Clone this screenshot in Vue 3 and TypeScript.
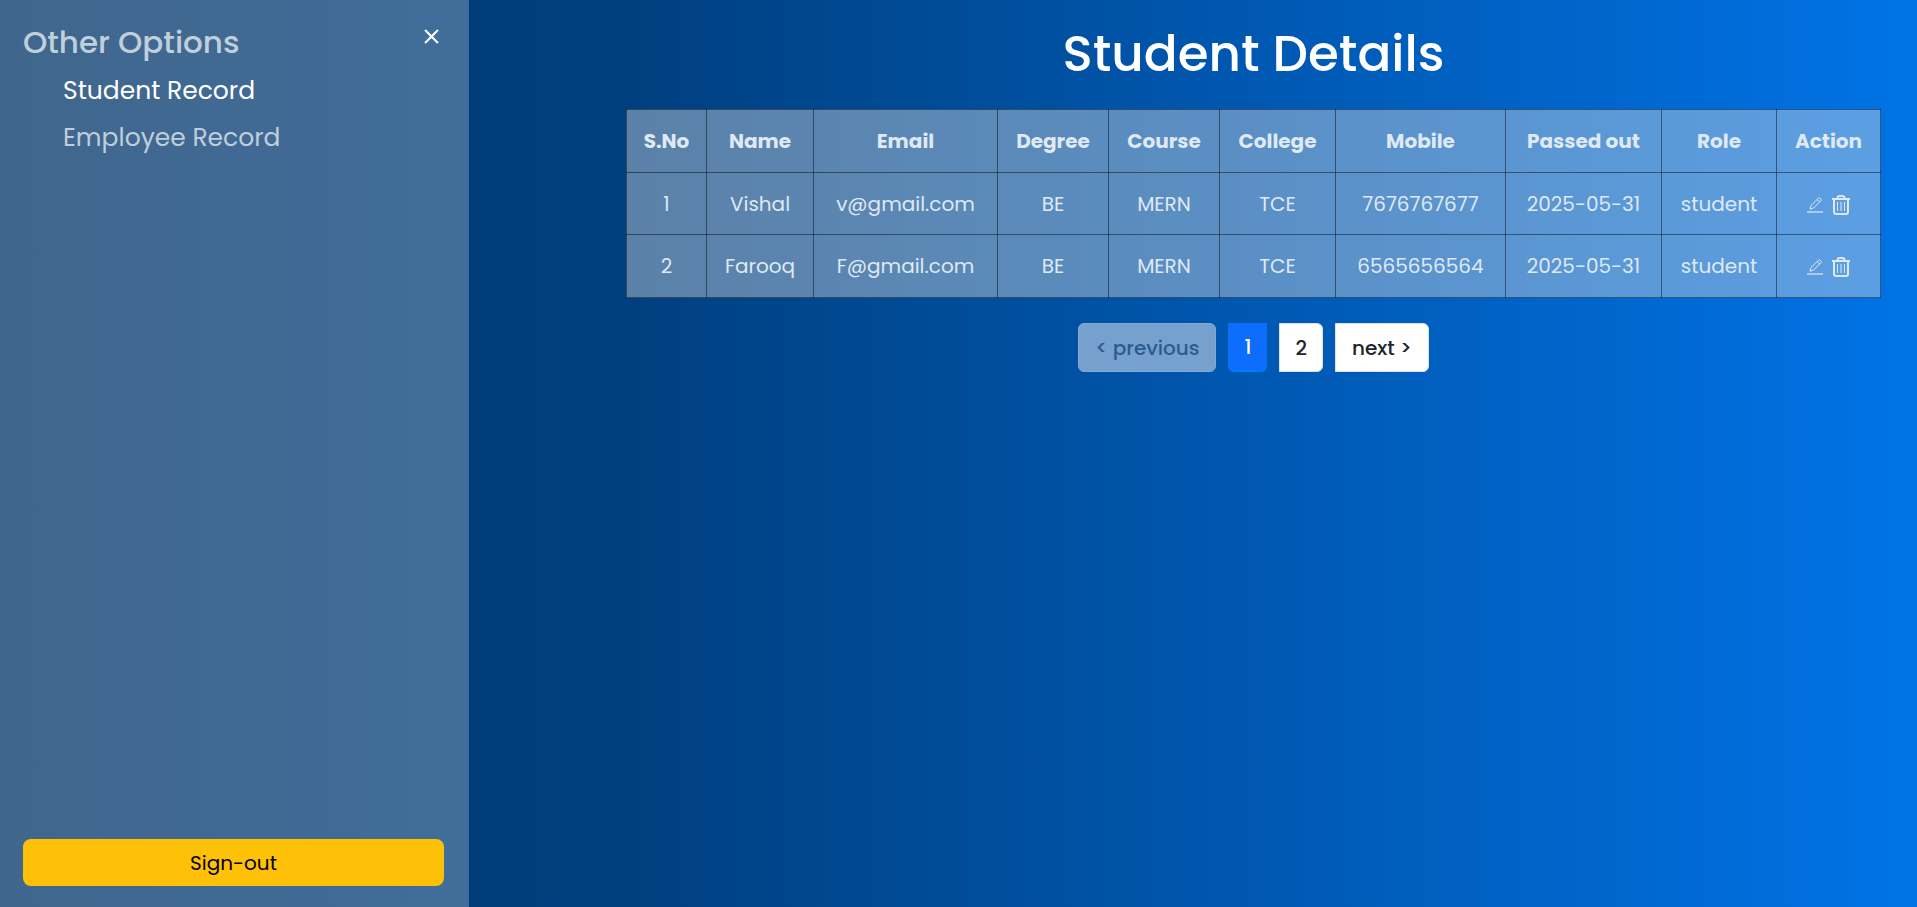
<script setup lang="ts">
import { ref } from 'vue'

interface Student {
  name: string
  email: string
  degree: string
  course: string
  college: string
  mobile: string
  passedOut: string
  role: string
}

const columns = ['S.No', 'Name', 'Email', 'Degree', 'Course', 'College', 'Mobile', 'Passed out', 'Role', 'Action']
const students: Student[] = [
  { name: 'Vishal', email: 'v@gmail.com', degree: 'BE', course: 'MERN', college: 'TCE', mobile: '7676767677', passedOut: '2025-05-31', role: 'student' },
  { name: 'Farooq', email: 'F@gmail.com', degree: 'BE', course: 'MERN', college: 'TCE', mobile: '6565656564', passedOut: '2025-05-31', role: 'student' },
]
const page = ref(1)
</script>

<template>
  <div class="layout">
    <aside class="sidebar">
      <div class="sidebar-head">
        <h2>Other Options</h2>
        <button class="close" type="button" aria-label="Close menu">
          <svg viewBox="0 0 14 14"><path d="M1 1l12 12M13 1L1 13" /></svg>
        </button>
      </div>
      <nav class="menu">
        <a class="active" href="#students">Student Record</a>
        <a href="#employees">Employee Record</a>
      </nav>
      <button class="sign-out" type="button">Sign-out</button>
    </aside>

    <main class="content">
      <h1>Student Details</h1>
      <table class="records">
        <colgroup>
          <col v-for="(c, i) in columns" :key="c" :class="'col-' + i" />
        </colgroup>
        <thead>
          <tr>
            <th v-for="c in columns" :key="c" scope="col">{{ c }}</th>
          </tr>
        </thead>
        <tbody>
          <tr v-for="(s, i) in students" :key="s.email">
            <td>{{ i + 1 }}</td>
            <td>{{ s.name }}</td>
            <td>{{ s.email }}</td>
            <td>{{ s.degree }}</td>
            <td>{{ s.course }}</td>
            <td>{{ s.college }}</td>
            <td>{{ s.mobile }}</td>
            <td>{{ s.passedOut }}</td>
            <td>{{ s.role }}</td>
            <td>
              <div class="actions">
                <button type="button" aria-label="Edit">
                  <svg class="edit" viewBox="0 0 16 16">
                    <path class="pen" d="M3 12.2l1-3.7L11.5 1.2q.8-.8 1.7 0l.8.8q.8.8 0 1.6L6.6 11zM10.2 2.5l2.5 2.5" />
                    <path class="line" d="M0 15h16" />
                  </svg>
                </button>
                <button type="button" aria-label="Delete">
                  <svg class="trash" viewBox="0 0 18 20">
                    <path d="M0 4h18M5.5 3.5V2.8Q5.7 1 7.3 1h3.4q1.6 0 1.8 1.8v.7" />
                    <path d="M2 4v13q0 2 2 2h10q2 0 2-2V4" />
                    <path class="slats" d="M5.5 7v9M9 7v9M12.5 7v9" />
                  </svg>
                </button>
              </div>
            </td>
          </tr>
        </tbody>
      </table>
      <nav class="pager" aria-label="Pages">
        <button class="previous" type="button" :disabled="page === 1" @click="page--">&lt; previous</button>
        <button v-for="n in 2" :key="n" class="number" :class="{ current: n === page }" type="button" @click="page = n">{{ n }}</button>
        <button class="next" type="button" :disabled="page === 2" @click="page++">next &gt;</button>
      </nav>
    </main>
  </div>
</template>

<style>
body {
  margin: 0;
}
</style>

<style scoped>
* {
  box-sizing: border-box;
}
.layout {
  display: grid;
  grid-template-columns: 469px 1fr;
  min-height: 100vh;
  background: linear-gradient(to right, #003366, #004080, #0059b3, #0073e6);
  font-family: Poppins, Inter, "Liberation Sans", sans-serif;
  font-size: 20px;
  line-height: 30px;
  color: #fff;
}
button {
  font: inherit;
  cursor: pointer;
}
.sidebar {
  display: flex;
  flex-direction: column;
  padding: 22px 25px 21px 23px;
  background: rgba(255, 255, 255, 0.25);
}
.sidebar-head {
  display: flex;
  justify-content: space-between;
  align-items: flex-start;
}
h2 {
  margin: 0;
  font-size: 31px;
  font-weight: 500;
  line-height: 40px;
  color: #c0cfdc;
}
.close {
  display: flex;
  padding: 7px 5px;
  border: 0;
  background: none;
}
.close svg {
  width: 15px;
  height: 15px;
  fill: none;
  stroke: #fff;
  stroke-width: 2;
}
.menu {
  display: flex;
  flex-direction: column;
  gap: 7px;
  padding: 9px 40px;
}
.menu a {
  font-size: 25px;
  line-height: 40px;
  color: #bfcedd;
  text-decoration: none;
}
.menu a.active {
  color: #fff;
}
.sign-out {
  height: 47px;
  margin-top: auto;
  border: 0;
  border-radius: 8px;
  background: #ffc107;
  color: #000;
}
.content {
  display: flex;
  flex-direction: column;
  align-items: center;
  padding: 24px 36px 0 157px;
}
h1 {
  margin: 0 0 25px;
  font-size: 50px;
  font-weight: 500;
  line-height: 60px;
}
.records {
  width: 100%;
  table-layout: fixed;
  border-collapse: collapse;
  background: rgba(228, 228, 228, 0.4);
  text-align: center;
  color: #dfe9f4;
}
.records th,
.records td {
  height: 62px;
  padding: 0;
  border: 1px solid rgba(0, 0, 0, 0.45);
}
.records th,
.records tr:last-child td {
  height: 63px;
}
.records th {
  font-weight: 700;
}
.col-0 { width: 80px; }
.col-1 { width: 107px; }
.col-2 { width: 184px; }
.col-3 { width: 111px; }
.col-4 { width: 111px; }
.col-5 { width: 116px; }
.col-6 { width: 170px; }
.col-7 { width: 156px; }
.col-8 { width: 115px; }
.col-9 { width: 104px; }
.actions {
  display: flex;
  justify-content: center;
  align-items: center;
  gap: 9px;
  padding-top: 2px;
}
.actions button {
  display: flex;
  padding: 0;
  border: 0;
  background: none;
}
.actions svg {
  fill: none;
  stroke: #dfe9f4;
}
.edit {
  width: 16px;
  height: 16px;
}
.pen {
  stroke-width: 1;
}
.line {
  stroke-width: 2;
  opacity: 0.6;
}
.trash {
  width: 18px;
  height: 20px;
  stroke-width: 2;
}
.slats {
  stroke-width: 1;
}
.pager {
  display: flex;
  gap: 12px;
  margin-top: 25px;
}
.pager button {
  height: 49px;
  padding: 0 16px;
  border: 1px solid #dee2e6;
  border-radius: 6px;
  background: #fff;
  font-weight: 500;
  color: #212529;
}
.pager .previous:disabled {
  border-color: #80a9d3;
  background: #76a1ce;
  color: #2c5b8d;
}
.pager .number,
.pager .next {
  border-radius: 0 6px 6px 0;
}
.pager .number {
  padding: 0 15px;
}
.pager .number.current {
  border-color: #0d6efd;
  border-bottom: 2px solid #007bff;
  border-radius: 0 0 6px 6px;
  background: #0d6efd;
  color: #fff;
}
</style>
